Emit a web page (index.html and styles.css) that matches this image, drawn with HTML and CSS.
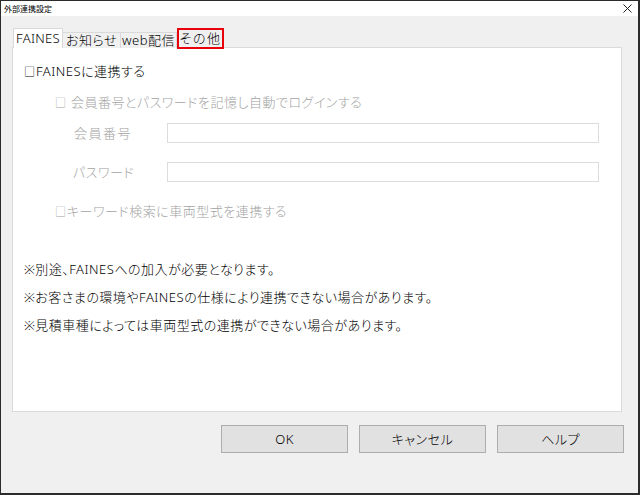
FILE: index.html
```html
<!DOCTYPE html>
<html lang="ja">
<head>
<meta charset="utf-8">
<title>外部連携設定</title>
<link rel="stylesheet" href="styles.css">
</head>
<body>
<div class="window">
  <div class="titlebar">
    <span class="title">外部連携設定</span>
    <svg class="close" width="9" height="9" viewBox="0 0 9 9"><path d="M0.5 0.5 L8.5 8.5 M8.5 0.5 L0.5 8.5" stroke="#222" stroke-width="1" fill="none"/></svg>
  </div>
  <div class="content">
    <div class="tabs">
      <div class="tab active">FAINES</div>
      <div class="tab t2">お知らせ</div>
      <div class="tab t3">web配信</div>
      <div class="tab marked">その他</div>
    </div>
    <div class="panel">
      <div class="line main"><span class="box">□</span>FAINESに連携する</div>
      <div class="line sub disabled"><span class="box">□</span> 会員番号とパスワードを記憶し自動でログインする</div>
      <div class="field first">
        <span class="label disabled">会員番号</span>
        <span class="input"></span>
      </div>
      <div class="field second">
        <span class="label disabled pw">パスワード</span>
        <span class="input"></span>
      </div>
      <div class="line sub disabled kw"><span class="box">□</span>キーワード検索に車両型式を連携する</div>
      <div class="notes">
        <div class="line">※別途、FAINESへの加入が必要となります。</div>
        <div class="line">※お客さまの環境やFAINESの仕様により連携できない場合があります。</div>
        <div class="line">※見積車種によっては車両型式の連携ができない場合があります。</div>
      </div>
    </div>
    <div class="buttons">
      <div class="btn">OK</div>
      <div class="btn">キャンセル</div>
      <div class="btn">ヘルプ</div>
    </div>
  </div>
</div>
</body>
</html>
```
FILE: styles.css
```css
* { box-sizing: border-box; }
html, body { margin: 0; padding: 0; }
body {
  width: 640px;
  height: 495px;
  background: #2b2b2b;
  font-family: "Noto Sans", "Noto Sans CJK JP", sans-serif;
  font-feature-settings: "palt";
  font-weight: 300;
  color: #000;
}
.window {
  width: 640px;
  height: 495px;
  border: 1px solid #2b2b2b;
  border-bottom-width: 2px;
  border-right-width: 2px;
  display: flex;
  flex-direction: column;
  background: #f0f0f0;
}
.titlebar {
  height: 15px;
  background: #fff;
  display: flex;
  align-items: center;
  justify-content: space-between;
  padding: 0 6px 0 3px;
}
.title {
  font-size: 8px;
  line-height: 10px;
  font-family: "Noto Sans CJK JP", sans-serif;
  font-weight: 400;
  color: #000;
}
.close { display: block; }
.content {
  flex: 1;
  display: flex;
  flex-direction: column;
  padding: 12px 14px 0 11px;
}
.tabs {
  display: flex;
  align-items: flex-end;
  padding-left: 1px;
  height: 20px;
  position: relative;
  z-index: 1;
  margin-bottom: -1px;
}
.tab {
  height: 16px;
  border: 1px solid #d9d9d9;
  border-bottom: none;
  border-left: none;
  background: #f0f0f0;
  font-size: 13px;
  line-height: 15px;
  white-space: nowrap;
  text-align: center;
  letter-spacing: 0.5px;
  color: #000;
}
.tab.active {
  height: 20px;
  width: 50px;
  background: #fff;
  border: 1px solid #d9d9d9;
  border-bottom: none;
  padding-top: 2px;
  letter-spacing: 0.3px;
}
.tab.t2 { width: 58px; }
.tab.t3 { width: 56px; }
.tab.marked {
  width: 47px;
  height: 21px;
  margin-bottom: -1px;
  border: 2px solid #e8000b;
  padding-top: 1px;
  letter-spacing: 1.5px;
}
.panel {
  width: 610px;
  height: 365px;
  background: #fff;
  border: 1px solid #dadada;
  padding: 14px 0 0 11px;
}
.line {
  font-size: 13px;
  line-height: 18px;
  height: 18px;
  letter-spacing: 0.5px;
  white-space: nowrap;
}
.box {
  font-size: 11px;
  line-height: 10px;
  letter-spacing: 0;
  margin-right: 1px;
}
.disabled { color: #a3a3a3; }
.sub { margin-left: 31px; margin-top: 13px; }
.field {
  display: flex;
  align-items: center;
  margin-top: 12px;
  height: 20px;
}
.field.second { margin-top: 19px; }
.label {
  font-size: 13px;
  line-height: 18px;
  letter-spacing: 1.5px;
  width: 143px;
  padding-left: 50px;
}
.label.pw { padding-left: 49px; letter-spacing: 0.5px; }
.input {
  width: 432px;
  height: 20px;
  border: 1px solid #dcdcdc;
  background: #fff;
}
.sub.kw { margin-top: 20px; }
.notes {
  margin-top: 40px;
  display: flex;
  flex-direction: column;
  gap: 10px;
}
.buttons {
  display: flex;
  justify-content: flex-end;
  gap: 11px;
  margin-top: 13px;
}
.btn {
  width: 127px;
  height: 28px;
  background: #e1e1e1;
  border: 1px solid #adadad;
  font-size: 13px;
  line-height: 26px;
  text-align: center;
  letter-spacing: 0.5px;
  color: #000;
}
```
